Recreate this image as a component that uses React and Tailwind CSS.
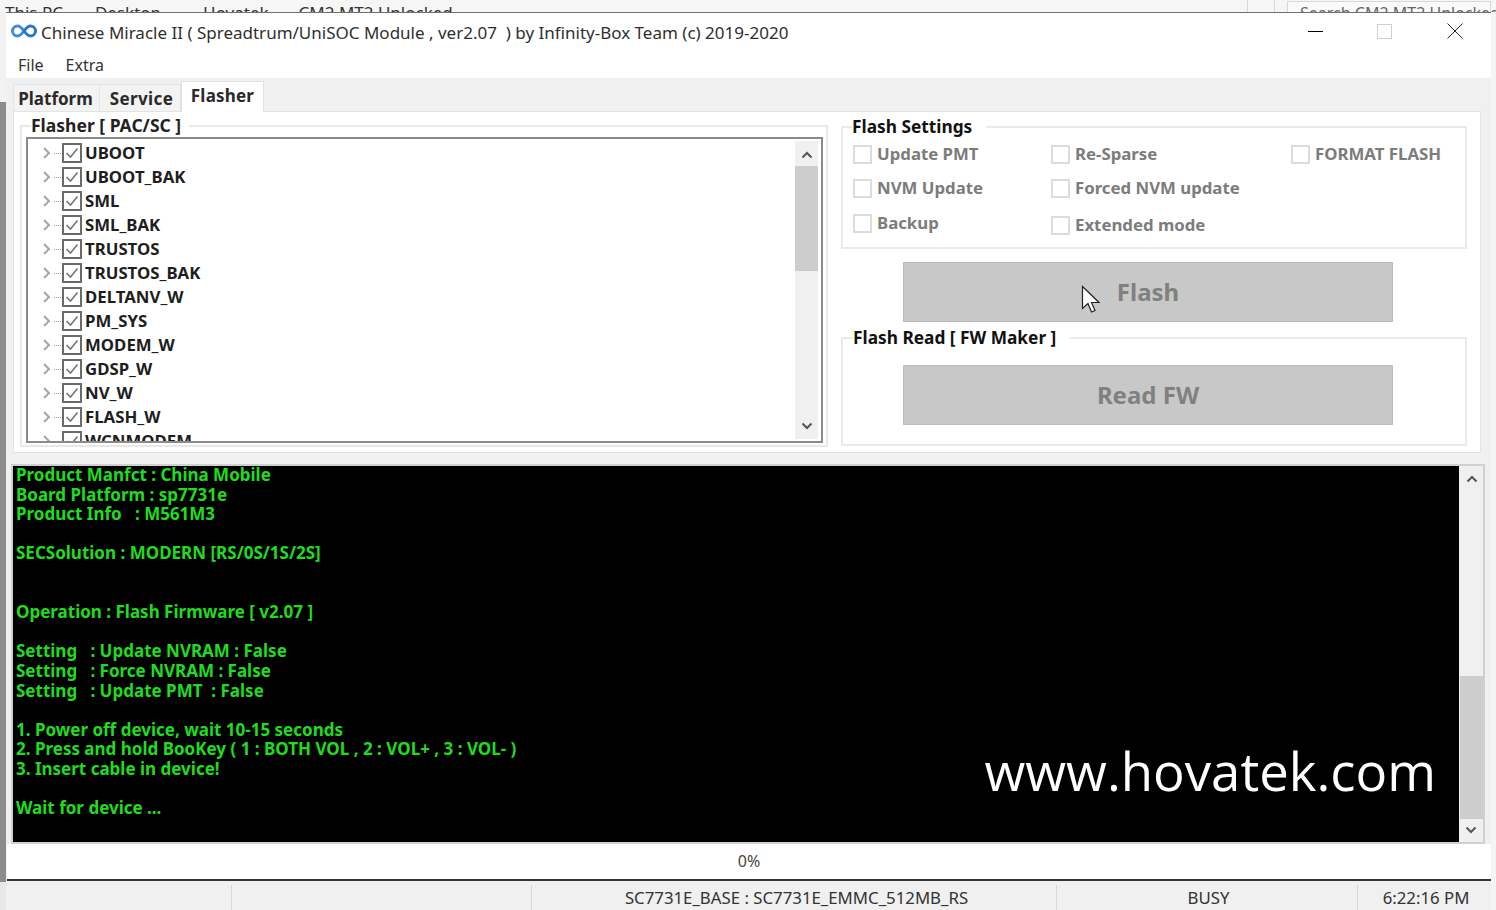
const TREE = ['UBOOT', 'UBOOT_BAK', 'SML', 'SML_BAK', 'TRUSTOS', 'TRUSTOS_BAK', 'DELTANV_W', 'PM_SYS', 'MODEM_W', 'GDSP_W', 'NV_W', 'FLASH_W', 'WCNMODEM']

const LOG = [
  'Product Manfct : China Mobile',
  'Board Platform : sp7731e',
  'Product Info   : M561M3',
  '',
  'SECSolution : MODERN [RS/0S/1S/2S]',
  '',
  '',
  'Operation : Flash Firmware [ v2.07 ]',
  '',
  'Setting   : Update NVRAM : False',
  'Setting   : Force NVRAM : False',
  'Setting   : Update PMT  : False',
  '',
  '1. Power off device, wait 10-15 seconds',
  '2. Press and hold BooKey ( 1 : BOTH VOL , 2 : VOL+ , 3 : VOL- )',
  '3. Insert cable in device!',
  '',
  'Wait for device ...',
]

function Chevron({ up, className }) {
  return (
    <svg width="12" height="8" viewBox="0 0 12 8" fill="none" stroke="currentColor" strokeWidth="2" className={className}>
      <path d={up ? 'M1.5 6.5 6 2l4.500 4.500' : 'M1.500 1.500 6 6l4.500-4.500'} />
    </svg>
  )
}

function TreeRow({ name }) {
  return (
    <div className="flex h-6 items-center">
      <svg width="10" height="14" viewBox="0 0 10 14" fill="none" stroke="#a6a6a6" strokeWidth="2" className="ml-[14px] shrink-0">
        <path d="M2 2l5 5-5 5" />
      </svg>
      <div className="ml-[2px] h-0 w-[7px] border-t border-dotted border-gray-400" />
      <div className="ml-px flex h-5 w-5 shrink-0 items-center justify-center border-2 border-[#6a6a6a] bg-white">
        <svg width="14" height="12" viewBox="0 0 14 12" fill="none" stroke="#777" strokeWidth="1.600">
          <path d="M1.500 6l4 4 7-8.500" />
        </svg>
      </div>
      <span className="ml-[3px] text-[16.800px] leading-none font-bold text-[#1e1e1e]">{name}</span>
    </div>
  )
}

function Option({ label, className }) {
  return (
    <div className={'flex items-center ' + className}>
      <div className="h-[19px] w-[19px] shrink-0 border-2 border-[#dcdcdc] bg-white" />
      <span className="ml-[5px] text-[16.800px] leading-none font-bold whitespace-nowrap text-[#7c7c7c]">{label}</span>
    </div>
  )
}

function BigButton({ label, className }) {
  return (
    <div className={'flex h-[60px] w-[490px] items-center justify-center border border-[#bcbcbc] bg-[#c8c8c8] text-[24px] font-bold text-[#808080] ' + className}>
      {label}
    </div>
  )
}

export default function App() {
  return (
    <div className="flex h-[910px] w-[1496px] flex-col overflow-hidden bg-[#f1f1f1] font-['Noto_Sans',sans-serif]">
      {/* explorer window peeking out behind the app */}
      <div className="flex h-3 shrink-0 items-start overflow-hidden bg-[#f6f6f6] text-[17px] leading-5 whitespace-nowrap text-[#333]">
        <span className="mt-[3px] ml-[5px]">This PC</span>
        <span className="mt-[3px] ml-[32px]">Desktop</span>
        <span className="mt-[3px] ml-[42px]">Hovatek</span>
        <span className="mt-[3px] ml-[30px]">CM2 MT2 Unlocked</span>
        <div className="ml-auto h-3 w-[28px] border-x border-[#d8d8d8]" />
        <div className="mt-px mr-[5px] ml-3 h-3 w-[204px] border border-b-0 border-[#d8d8d8] bg-[#fafafa] pt-[1px] pl-3 text-[16px] text-[#666]">Search CM2 MT2 Unlocked</div>
      </div>

      <div className="flex min-h-0 flex-1">
        <div className="flex w-[6px] shrink-0 flex-col">
          <div className="h-[90px] bg-[#f2f2f2]" />
          <div className="flex-1 bg-[#8c8c8c]" />
          <div className="h-[28px] bg-[#e8e8e8]" />
        </div>

        <div className="flex min-w-0 w-[1485px] shrink-0 flex-col border-t border-[#6f6f6f] bg-[#f0f0f0]">
          <div className="flex h-[39px] shrink-0 items-center bg-white pb-px">
            <svg width="26" height="14" viewBox="0 0 26 14" fill="none" strokeWidth="3" className="mb-[2px] ml-[5px] shrink-0">
              <path d="M13 7C10.500 3.500 8.500 2 6.500 2a5 5 0 0 0 0 10C8.500 12 10.500 10.500 13 7Z" stroke="#3f8fd2" />
              <path d="M13 7c2.500-3.500 4.500-5 6.500-5a5 5 0 0 1 0 10c-2 0-4-1.500-6.500-5Z" stroke="#2a78c0" />
            </svg>
            <span className="ml-[4px] text-[17px] leading-none whitespace-pre text-[#2f2f2f]">
              Chinese Miracle II ( Spreadtrum/UniSOC Module , ver2.07  ) by Infinity-Box Team (c) 2019-2020
            </span>
            <div className="mb-[2px] ml-auto flex items-center">
              <div className="h-px w-[15px] bg-black" />
              <div className="ml-[54px] h-[15px] w-[15px] border border-[#cfcfcf]" />
              <svg width="16" height="16" viewBox="0 0 16 16" stroke="#222" strokeWidth="1" className="mr-[28px] ml-[55px]">
                <path d="M.500.500l15 15M15.500.500l-15 15" />
              </svg>
            </div>
          </div>

          <div className="flex h-[26px] shrink-0 items-center gap-[22px] bg-white pl-[12px] text-[16px] text-[#333]">
            <span>File</span>
            <span>Extra</span>
          </div>

          <div className="flex h-[33px] shrink-0 items-end pl-[7px] text-[17px] leading-none font-bold">
            <div className="flex h-[27px] w-[87px] items-center justify-center border border-b-0 border-[#e4e4e4] bg-[#f3f3f3] pr-[2px] text-[#2a2a2a]">Platform</div>
            <div className="flex h-[27px] w-[81px] items-center justify-center border border-b-0 border-l-0 border-[#e4e4e4] bg-[#f3f3f3] pl-[3px] tracking-[.4px] text-[#2a2a2a]">Service</div>
            <div className="z-10 -mb-px flex h-[31px] w-[83px] items-center justify-center border border-b-0 border-[#e0e0e0] bg-white pb-[4px] tracking-[.2px] text-[#2a2a2a]">Flasher</div>
          </div>

          <div className="mr-[10px] ml-[7px] flex h-[342px] shrink-0 gap-[13px] border border-[#e3e3e3] bg-white pt-[3px] pr-[13px] pl-[6px]">
            {/* firmware partitions */}
            <fieldset className="h-[332px] w-[808px] shrink-0 border-2 border-[#e8e8e8] pr-[3px] pb-[2px] pl-[4px]">
              <legend className="ml-[5px] bg-white pr-[8px] text-[17.500px] leading-[21px] font-bold text-[#222]">Flasher [ PAC/SC ]</legend>
              <div className="mt-px flex h-[306px] border-2 border-[#8a8a8a] bg-white">
                <div className="min-w-0 flex-1 overflow-hidden pt-[2px]">
                  {TREE.map(n => <TreeRow key={n} name={n} />)}
                </div>
                <div className="my-[2px] mr-[3px] flex w-[23px] shrink-0 flex-col items-center bg-[#f0f0f0] text-[#555]">
                  <Chevron up className="mt-[10px]" />
                  <div className="mt-[7px] h-[105px] w-full bg-[#cdcdcd]" />
                  <Chevron className="mt-auto mb-[9px]" />
                </div>
              </div>
            </fieldset>

            <div className="relative flex min-w-0 flex-1 flex-col">
              <fieldset className="mt-px h-[133px] shrink-0 border-2 border-[#eaeaea] pl-[10px]">
                <legend className="-ml-px bg-white pr-[14px] text-[17.300px] leading-[22px] font-bold text-[#111]">Flash Settings</legend>
                <div className="flex h-[105px]">
                  <div className="flex w-[198px] shrink-0 flex-col pt-[7px]">
                    <Option label="Update PMT" className="h-[19px]" />
                    <Option label="NVM Update" className="mt-[15px] h-[19px]" />
                    <Option label="Backup" className="mt-[16px] h-[19px]" />
                  </div>
                  <div className="flex w-[240px] shrink-0 flex-col pt-[7px]">
                    <Option label="Re-Sparse" className="h-[19px]" />
                    <Option label="Forced NVM update" className="mt-[15px] h-[19px]" />
                    <Option label="Extended mode" className="mt-[18px] h-[19px]" />
                  </div>
                  <div className="pt-[7px]">
                    <Option label="FORMAT FLASH" className="h-[19px]" />
                  </div>
                </div>
              </fieldset>

              <div className="mt-[13px] shrink-0">
                <BigButton label="Flash" className="ml-[62px]" />
              </div>

              <fieldset className="mt-[5px] h-[119px] shrink-0 border-2 border-[#eaeaea]">
                <legend className="ml-[10px] bg-white pr-[14px] text-[17.300px] leading-[22px] font-bold text-[#111]">Flash Read [ FW Maker ]</legend>
                <div className="pt-[16px]">
                  <BigButton label="Read FW" className="ml-[60px]" />
                </div>
              </fieldset>

              {/* mouse pointer caught by the recording */}
              <svg width="20" height="29" viewBox="0 0 20 29" className="absolute top-[170px] left-[240px]">
                <path d="M1.500 1.500v22l5.500-5 3.500 8.500 3.500-1.500-3.500-8h7.500Z" fill="#fff" stroke="#222" strokeWidth="1.200" />
              </svg>
            </div>
          </div>

          <div className="mt-[11px] mr-[6px] ml-[5px] flex h-[380px] shrink-0 border-2 border-[#d0d0d0] bg-[#f0f0f0]">
            <div className="relative min-w-0 flex-1 overflow-hidden bg-black pl-[3px] text-[17px] leading-[19.600px] font-bold whitespace-pre text-[#1fdc1f]">
              <div className="-mt-px">
                {LOG.map((line, i) => <div key={i} className="h-[19.600px]">{line}</div>)}
              </div>
              <span className="absolute right-[23px] bottom-[44px] font-['Open_Sans',sans-serif] text-[52.700px] leading-none font-normal text-white">www.hovatek.com</span>
            </div>
            <div className="flex w-[24px] shrink-0 flex-col items-center text-[#555]">
              <Chevron up className="mt-[9px] ml-[2px]" />
              <div className="mt-auto h-[143px] w-[23px] bg-[#cdcdcd]" />
              <Chevron className="mt-[7px] mb-[8px]" />
            </div>
          </div>

          <div className="ml-[1px] flex h-[37px] shrink-0 items-center justify-center border-b-2 border-[#333] bg-white pb-[2px] text-[16px] text-[#444]">0%</div>

          <div className="flex min-h-0 flex-1 items-center bg-[#f0f0f0] pt-[4px] text-[16.800px] text-[#333]">
            <div className="h-full w-[226px] shrink-0 border-r border-[#d8d8d8]" />
            <div className="h-full w-[300px] shrink-0 border-r border-[#d8d8d8]" />
            <div className="flex h-full w-[525px] shrink-0 items-center justify-center border-r border-[#d8d8d8] pl-[5px] whitespace-nowrap">SC7731E_BASE : SC7731E_EMMC_512MB_RS</div>
            <div className="flex h-full w-[301px] shrink-0 items-center justify-center border-r border-[#d8d8d8] pl-[3px]">BUSY</div>
            <div className="flex h-full flex-1 items-center justify-center pl-[3px] whitespace-nowrap">6:22:16 PM</div>
          </div>
        </div>

        <div className="min-w-0 flex-1 bg-[#f4f4f4]" />
      </div>
    </div>
  )
}
